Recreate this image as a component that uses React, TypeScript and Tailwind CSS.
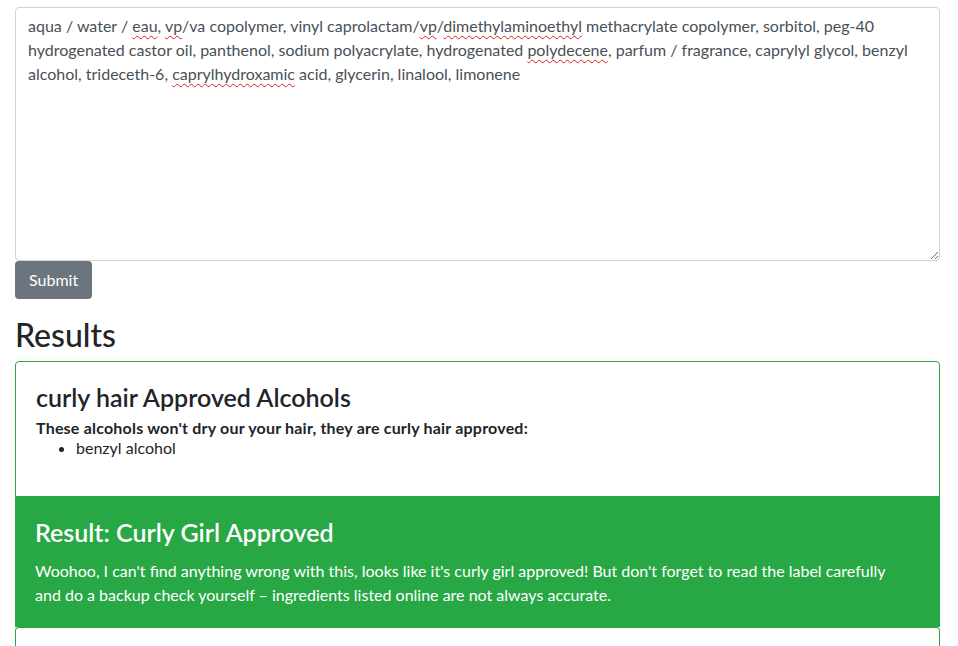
import React from "react";

const W = ({ children }: { children: React.ReactNode }) => (
  <span className="underline decoration-wavy decoration-[#e0201c] decoration-1 underline-offset-[3px]">{children}</span>
);

export default function App() {
  return (
    <div className="min-h-[646px] bg-white pl-[15px] pr-[18px] pt-[7px]" style={{ fontFamily: "Lato, 'Noto Sans', sans-serif" }}>
      <div className="h-[254px] w-full resize-y overflow-auto rounded-[4px] border border-solid border-[#ced4da] px-[12px] py-[6px] text-[16px] leading-[24px] text-[#495057]">
        aqua / water / <W>eau</W>, <W>vp</W>/va copolymer, vinyl caprolactam/<W>vp</W>/<W>dimethylaminoethyl</W> methacrylate copolymer, sorbitol, peg-40
        <br />
        hydrogenated castor oil, panthenol, sodium polyacrylate, hydrogenated <W>polydecene</W>, parfum / fragrance, caprylyl glycol, benzyl
        <br />
        alcohol, trideceth-6, <W>caprylhydroxamic</W> acid, glycerin, linalool, limonene
      </div>
      <button className="flex h-[38px] items-center rounded-[4px] bg-[#6c757d] px-[14px] text-[16px] text-white">Submit</button>
      <h2 className="mt-[17px] mb-[7px] text-[32px] font-medium leading-[38px] text-[#212529]">Results</h2>
      <div className="flex flex-col">
        <div className="rounded-t-[4px] border border-solid border-[#28a745] px-[20px] pt-[20px] pb-[38px] text-[#28a745]">
          <h4 className="mb-[5px] text-[25px] font-semibold leading-[30px] text-[#212529]">curly hair Approved Alcohols</h4>
          <p className="text-[16px] font-bold leading-[21px] tracking-[0.2px] text-[#212529]">These alcohols won't dry our your hair, they are curly hair approved:</p>
          <ul className="list-disc pl-[40px] text-[16px] leading-[20px] text-[#212529]">
            <li>benzyl alcohol</li>
          </ul>
        </div>
        <div className="bg-[#28a745] px-[20px] pt-[20px] pb-[20px] text-white">
          <h4 className="mb-[12px] text-[25px] font-semibold leading-[30px]">Result: Curly Girl Approved</h4>
          <p className="text-[16px] leading-[24px]">
            Woohoo, I can't find anything wrong with this, looks like it's curly girl approved! But don't forget to read the label carefully
            <br />
            and do a backup check yourself – ingredients listed online are not always accurate.
          </p>
        </div>
        <div className="h-[40px] rounded-t-[4px] border border-b-0 border-solid border-[#28a745] text-[#28a745]" />
      </div>
    </div>
  );
}
